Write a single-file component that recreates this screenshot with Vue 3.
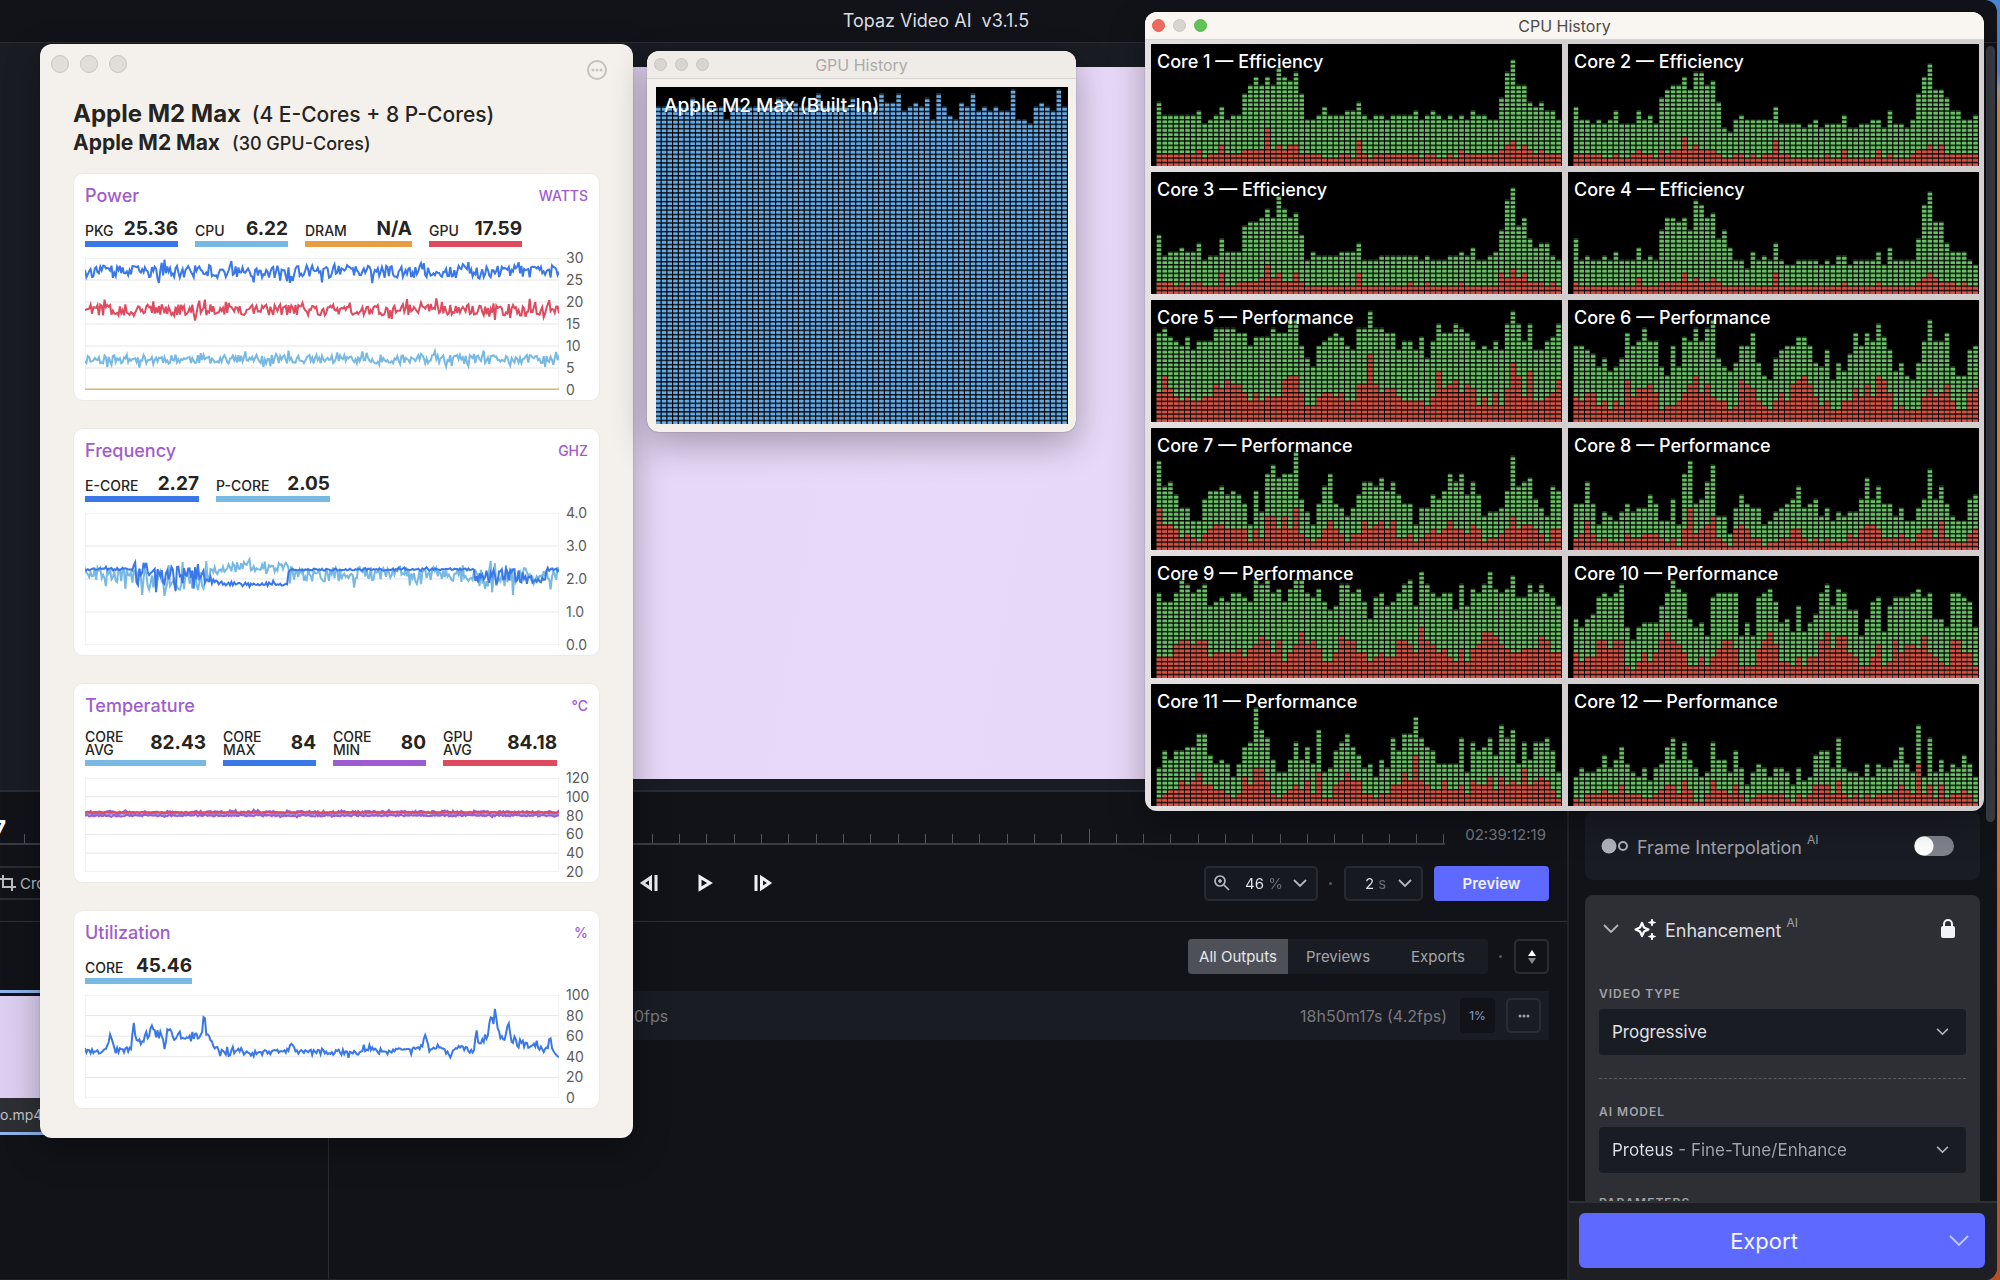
<script setup>
// Small deterministic generator so that every load draws the same traces.
function rng(seed) {
  let s = seed
  return () => {
    s = (s * 1664525 + 1013904223) % 4294967296
    return s / 4294967296
  }
}

function valueAt(keys, t) {
  for (let i = 1; i < keys.length; i++) {
    const [t1, v1, a1] = keys[i]
    const [t0, v0, a0] = keys[i - 1]
    if (t <= t1) {
      const k = (t - t0) / (t1 - t0 || 1)
      return [v0 + (v1 - v0) * k, a0 + (a1 - a0) * k]
    }
  }
  const last = keys[keys.length - 1]
  return [last[1], last[2]]
}

// keys: [time 0..1, value, noise amplitude]
function trace(keys, seed, min, max, height) {
  const rand = rng(seed)
  const n = 340
  const pts = []
  for (let i = 0; i <= n; i++) {
    const t = i / n
    const [v, a] = valueAt(keys, t)
    const spike = rand() > 0.85 ? 2 : 1
    const y = height * (1 - (v + (rand() - 0.5) * 2 * a * spike - min) / (max - min))
    pts.push(`${(t * 474).toFixed(1)},${y.toFixed(1)}`)
  }
  return pts.join(' ')
}

const flat = (v, a) => [[0, v, a], [1, v, a]]
const BLUE = '#3a78e8'
const SKY = '#77b9e2'
const RED = '#de4a5e'
const ORANGE = '#e99d42'
const PURPLE = '#9d5cd0'

const cards = [
  {
    title: 'Power', unit: 'WATTS', height: 132, min: 0, max: 30,
    ticks: ['30', '25', '20', '15', '10', '5', '0'],
    legend: [
      { label: 'PKG', value: '25.36', color: BLUE, size: 'w93' },
      { label: 'CPU', value: '6.22', color: SKY, size: 'w93' },
      { label: 'DRAM', value: 'N/A', color: ORANGE, size: 'w107' },
      { label: 'GPU', value: '17.59', color: RED, size: 'w93' },
    ],
    series: [
      { color: '#dcb36f', keys: flat(0.1, 0), seed: 1 },
      { color: SKY, keys: flat(7, 1), seed: 11 },
      { color: RED, keys: flat(18.2, 1.3), seed: 24 },
      { color: BLUE, keys: flat(26.9, 1.4), seed: 37 },
    ],
  },
  {
    title: 'Frequency', unit: 'GHZ', height: 132, min: 0, max: 4,
    ticks: ['4.0', '3.0', '2.0', '1.0', '0.0'],
    legend: [
      { label: 'E-CORE', value: '2.27', color: BLUE, size: 'w114' },
      { label: 'P-CORE', value: '2.05', color: SKY, size: 'w114' },
    ],
    series: [
      {
        color: SKY, seed: 52,
        keys: [[0, 2.15, .2], [.1, 2.1, .22], [.11, 2, .32], [.25, 2, .35], [.27, 2.25, .18], [.34, 2.4, .15],
          [.42, 2.35, .15], [.44, 2.15, .22], [.82, 2.15, .24], [.84, 2, .3], [.9, 1.9, .35], [.92, 2.15, .22], [1, 2.15, .28]],
      },
      {
        color: BLUE, seed: 64,
        keys: [[0, 2.3, .04], [.1, 2.3, .04], [.105, 2.08, .28], [.25, 2.15, .26], [.27, 1.92, .08], [.3, 1.85, .05],
          [.4, 1.85, .05], [.427, 1.83, .04], [.43, 2.28, .03], [.82, 2.3, .03], [.825, 2.1, .24], [.91, 2.1, .22],
          [.93, 2, .1], [.97, 1.95, .1], [.975, 2.3, .05], [1, 2.28, .05]],
      },
    ],
  },
  {
    title: 'Temperature', unit: '°C', height: 94, min: 20, max: 120, tall: true,
    ticks: ['120', '100', '80', '60', '40', '20'],
    legend: [
      { label: 'CORE AVG', value: '82.43', color: SKY, size: 'w121' },
      { label: 'CORE MAX', value: '84', color: BLUE, size: 'w93' },
      { label: 'CORE MIN', value: '80', color: PURPLE, size: 'w93' },
      { label: 'GPU AVG', value: '84.18', color: RED, size: 'w114' },
    ],
    series: [
      { color: '#8f8fe0', keys: flat(81.6, .8), seed: 71 },
      { color: PURPLE, keys: flat(83.8, 1.2), seed: 75 },
      { color: PURPLE, keys: flat(80, .9), seed: 79 },
      { color: RED, keys: flat(83.4, .2), seed: 83 },
    ],
  },
  {
    title: 'Utilization', unit: '%', height: 103, min: 0, max: 100,
    ticks: ['100', '80', '60', '40', '20', '0'],
    legend: [{ label: 'CORE', value: '45.46', color: SKY, size: 'w107' }],
    series: [
      {
        color: BLUE, seed: 95,
        keys: [[0, 47, 2], [.02, 44, 2], [.047, 47, 2], [.053, 63, 1], [.063, 46, 3], [.098, 47, 3], [.102, 74, 1],
          [.108, 54, 5], [.135, 63, 5], [.17, 59, 6], [.178, 70, 3], [.185, 60, 5], [.24, 59, 5], [.248, 64, 3],
          [.251, 87, 0], [.256, 62, 2], [.272, 52, 3], [.283, 44, 3], [.42, 44, 3], [.436, 52, 1], [.445, 45, 2],
          [.58, 44, 3], [.6, 50, 3], [.62, 45, 3], [.71, 47, 3], [.717, 62, 1], [.726, 47, 2], [.75, 50, 1],
          [.77, 43, 2], [.79, 50, 3], [.82, 44, 2], [.826, 66, 2], [.832, 50, 3], [.85, 63, 3], [.857, 84, 1],
          [.861, 68, 1], [.865, 88, 0], [.872, 60, 3], [.886, 57, 2], [.893, 74, 0], [.899, 58, 4], [.92, 52, 5],
          [.975, 46, 3], [.981, 62, 0], [.986, 46, 1], [1, 42, 3]],
      },
    ],
  },
]
cards.forEach((c) => c.series.forEach((s) => { s.points = trace(s.keys, s.seed, c.min, c.max, c.height) }))

// One base-36 digit per column: the number of lit cells (total, then system share).
const cores = [
  ['Efficiency', 'fccccccdabcebcchjljljnlkmhbbcecccddfcbccbccccdbcdcbcbcbdccbbgmpjjfefddb',
    '33333334233533344449454553333222332632333333332332232433333345645434333'],
  ['Efficiency', 'ebbababdaaadbcagijjlimmjkf98bcbbbbbeaaaa9ab9aaac99aabb9daa9bhloiigddbbc',
    '33333223223433243447454443223323233633222222322422222423222344545333333'],
  ['Efficiency', 'e9aabaac899daaaghhikinkije8a9999aaac8889999999898889' + '9a9b889afmpgidbcc98',
    '33323233222522333347453353222222222522222222322322222322222254645333232'],
  ['Efficiency', 'd898898a888b898fiihifmlijdfb886a898c87788887879978888a7b8888dlohhcaaa87',
    '32222222222422233335343343222222222522222222222322222322222234543332322'],
  ['Performance', 'lmkjikhjjjmmmmllikkkmllooifdijklkihmmqmmllhjjhkfjnllnmljhihjhnqnjnhhjkn',
    '7b8656556698a9975756666abb744677675599g97886555546c89a798464748eb6c5567a'.replace('75756666', '7575666')],
  ['Performance', 'iihgdfcdflijmjjdbidkjmjmofdceiilebafhiikkiedhaecgliljnkhcebaejojjldbbhi',
    '657745354a68897344579b7965534a985435759ab964533558696ba7343336867953378'],
  ['Performance', 'lfgdaa77ceefdedb6e9ikhiinc96bfiba8adggfhegdbb6aadceigidgd899aemfghca8fe',
    'a66534324566555525388585a4323575424475675733423454575546523345856654255'],
  ['Performance', 'bbgb69879b9aadb77c6ilbcgk884adbaa679abcfabc8a79899chcfbb8a77acjcfb877cd',
    '34742322243344432315a45683215653312233553232322243566533343245537322245'],
  ['Performance', 'kiiknmklmhijikkjinmnklilnnkjlighmmkliejkhikmnhpmkjkkgmhlkmplklojjmkmkjh',
    '555899899566667578a969468b897446a9966456559986c9867547478bba8766777a966'],
  ['Performance', 'ecefjkjkmc9cdddhknlkecdajkkkkadajklidebhbdfkmhlkggaeijbhjjjkljkeeckkjic',
    '6455997993246469b98633535799733379b844353559b7aa6533583496887a654399663'],
  ['Performance', '9dbddeehhcaba7aefnigb88bfbeai89dfhec9a7b9gdhhlgedaaaag8fdegcjgiafbffgd8',
    '234465685544323759963234546382256866332335586c6544644536557475659567642'],
  ['Performance', '79889c9bea87969aegbfb978fbb8d958a979985967cdd9g9887a7a99bea8j7g8b8a9ca7',
    '213334335333223455364113644353123333321323555363232323334543a3525233431'],
].map(([kind, total, system], i) => ({
  label: `Core ${i + 1} — ${kind}`,
  user: columns(total, 0, 288, 86),
  system: columns(system, 0, 288, 86),
}))

function columns(digits, base, width, height) {
  const left = width - digits.length * 4
  return [...digits].map((d, i) => {
    const h = (base + parseInt(d, 36)) * 3
    return `M${left + i * 4} ${height - h}h3.2v${h}h-3.2z`
  }).join('')
}

const gpu = columns(
  '444444644444144444444665544474444464344755734546174215473434338110454384', 70, 288, 236)

const ticks = Array.from({ length: 53 }, (_, i) => i)
</script>

<template>
  <div class="desktop">
    <div class="app">
      <header class="titlebar"><h1>Topaz Video AI&nbsp; v3.1.5</h1></header>

      <div class="body">
        <main class="main">
          <section class="viewer"><div class="frame"></div></section>

          <section class="timeline">
            <div class="ruler-row">
              <div class="ruler">
                <span class="now">7</span>
                <i v-for="t in ticks" :key="t" class="tick" :class="{ major: t === 39 }"></i>
              </div>
              <span class="length">02:39:12:19</span>
            </div>
            <div class="controls">
              <button class="crop" type="button">
                <svg width="16" height="16" viewBox="0 0 16 16" fill="none" stroke="currentColor" stroke-width="2"><path d="M3 0v12h13M0 4h12v12" /></svg>
                Crop
              </button>
              <div class="transport">
                <button type="button" aria-label="Previous frame">
                  <svg width="20" height="20" viewBox="0 0 20 20" fill="none" stroke="currentColor" stroke-width="3"><path d="M11.500 4.500v11L3.500 10z" /><path d="M17 2v16" /></svg>
                </button>
                <button type="button" aria-label="Play">
                  <svg width="20" height="20" viewBox="0 0 20 20" fill="none" stroke="currentColor" stroke-width="3"><path d="M4 4v12l10-6z" /></svg>
                </button>
                <button type="button" aria-label="Next frame">
                  <svg width="20" height="20" viewBox="0 0 20 20" fill="none" stroke="currentColor" stroke-width="3"><path d="M8.500 4.500v11l8-5.500z" /><path d="M3 2v16" /></svg>
                </button>
              </div>
              <div class="right">
                <div class="pick zoom">
                  <svg class="lens" width="16" height="16" viewBox="0 0 16 16" fill="none" stroke="currentColor" stroke-width="1.700"><circle cx="6" cy="6" r="5" /><path d="M10 10l5 5M6 4v4M4 6h4" /></svg>
                  <select aria-label="Zoom"><option>46 %</option></select>
                  <svg class="chev" width="14" height="9" viewBox="0 0 14 9"><path d="M1 1l6 6 6-6" /></svg>
                </div>
                <span class="dot"></span>
                <div class="pick secs">
                  <select aria-label="Preview length"><option>2 s</option></select>
                  <svg class="chev" width="14" height="9" viewBox="0 0 14 9"><path d="M1 1l6 6 6-6" /></svg>
                </div>
                <button class="preview" type="button">Preview</button>
              </div>
            </div>
          </section>

          <section class="lower">
            <aside class="files">
              <div class="thumb">
                <div class="still"></div>
                <div class="name">o.mp4</div>
              </div>
            </aside>
            <div class="outputs">
              <div class="outputs-head">
                <div class="tabs">
                  <button type="button" class="on">All Outputs</button>
                  <button type="button">Previews</button>
                  <button type="button">Exports</button>
                </div>
                <span class="dot"></span>
                <button class="square" type="button" aria-label="Sort">
                  <svg width="10" height="16" viewBox="0 0 10 16"><path d="M5 1l4 6H1z" fill="#fff" /><path d="M5 15l4-6H1z" fill="#85878d" /></svg>
                </button>
              </div>
              <div class="job">
                <span class="job-name">0fps</span>
                <span class="eta">18h50m17s (4.2fps)</span>
                <span class="badge">1%</span>
                <button class="square" type="button" aria-label="More">
                  <svg width="12" height="4" viewBox="0 0 12 4" fill="#a0a2a8"><circle cx="2" cy="2" r="1.500" /><circle cx="6" cy="2" r="1.500" /><circle cx="10" cy="2" r="1.500" /></svg>
                </button>
              </div>
            </div>
          </section>
        </main>

        <aside class="sidebar">
          <div class="panels">
            <div class="panel interp">
              <svg width="28" height="18" viewBox="0 0 28 18"><circle cx="8" cy="9" r="7.500" fill="#b0b2ba" /><circle cx="22" cy="9" r="4" fill="none" stroke="#b0b2ba" stroke-width="2" /></svg>
              <label for="interp">Frame Interpolation <sup>AI</sup></label>
              <input id="interp" type="checkbox" role="switch" />
            </div>
            <div class="panel enhance">
              <div class="enhance-head">
                <svg class="chev" width="16" height="10" viewBox="0 0 16 10"><path d="M1 1l7 7 7-7" /></svg>
                <svg class="spark" width="24" height="24" viewBox="0 0 24 24">
                  <path d="M9 6l2 4.500 4.500 2-4.500 2-2 4.500-2-4.500-4.500-2 4.500-2z" fill="none" stroke="#fff" stroke-width="2.200" stroke-linejoin="round" />
                  <path d="M19 2l.8 2.700 2.700.8-2.700.8-.8 2.700-.8-2.700-2.700-.8 2.700-.8zM19 16l.8 2.700 2.700.8-2.700.8-.8 2.700-.8-2.700-2.700-.8 2.700-.8z" fill="#fff" stroke="#fff" />
                </svg>
                <h2>Enhancement <sup>AI</sup></h2>
                <svg class="lock" width="16" height="20" viewBox="0 0 16 20"><path d="M4 8V5a4 4 0 0 1 8 0v3" fill="none" stroke="#f2f3f8" stroke-width="2" /><rect x="1" y="7" width="14" height="12" rx="2" fill="#f2f3f8" /></svg>
              </div>
              <label class="cap first" for="vtype">VIDEO TYPE</label>
              <div class="drop">
                <select id="vtype"><option>Progressive</option></select>
                <svg class="chev" width="13" height="8" viewBox="0 0 14 9"><path d="M1 1l6 6 6-6" /></svg>
              </div>
              <hr />
              <label class="cap" for="model">AI MODEL</label>
              <div class="drop">
                <select id="model" class="two"><option>Proteus - Fine-Tune/Enhance</option></select>
                <svg class="chev" width="13" height="8" viewBox="0 0 14 9"><path d="M1 1l6 6 6-6" /></svg>
              </div>
              <div class="cap params">PARAMETERS</div>
            </div>
          </div>
          <footer class="foot">
            <button class="export" type="button">
              <span>Export</span>
              <svg class="chev" width="20" height="12" viewBox="0 0 20 12"><path d="M1 1l9 9 9-9" /></svg>
            </button>
          </footer>
          <div class="scroll"></div>
        </aside>
      </div>
    </div>

    <!-- Power monitor -->
    <section class="window monitor">
      <div class="monitor-bar">
        <div class="lights big"><i></i><i></i><i></i></div>
        <button type="button" class="more" aria-label="Options">
          <svg width="22" height="22" viewBox="0 0 22 22"><circle cx="11" cy="11" r="9" fill="none" stroke="#c5c2be" stroke-width="2" /><g fill="#c5c2be"><circle cx="7" cy="11" r="1.500" /><circle cx="11" cy="11" r="1.500" /><circle cx="15" cy="11" r="1.500" /></g></svg>
        </button>
      </div>
      <h2 class="chip">Apple M2 Max <span>(4 E-Cores + 8 P-Cores)</span></h2>
      <h3 class="chip small">Apple M2 Max <span>(30 GPU-Cores)</span></h3>
      <div class="cards">
        <article v-for="c in cards" :key="c.title" class="card">
          <div class="card-head"><h4>{{ c.title }}</h4><span>{{ c.unit }}</span></div>
          <ul class="legend" :class="{ tall: c.tall }">
            <li v-for="l in c.legend" :key="l.label" :class="l.size" :style="{ borderColor: l.color }">
              <span>{{ l.label }}</span><b>{{ l.value }}</b>
            </li>
          </ul>
          <div class="plot">
            <svg width="474" :height="c.height" :viewBox="`0 0 474 ${c.height}`">
              <rect x="0" y="0" width="474" :height="c.height" fill="none" stroke="#e6e6e8" />
              <path v-for="n in c.ticks.length - 2" :key="n" :d="`M0 ${(n * c.height) / (c.ticks.length - 1)}h474`" stroke="#e6e6e8" />
              <polyline v-for="s in c.series" :key="s.seed" :points="s.points" fill="none" :stroke="s.color" stroke-width="2" />
            </svg>
            <ol class="axis"><li v-for="t in c.ticks" :key="t">{{ t }}</li></ol>
          </div>
        </article>
      </div>
    </section>

    <!-- GPU history -->
    <section class="window gpu">
      <div class="bar"><div class="lights"><i></i><i></i><i></i></div><h2>GPU History</h2></div>
      <div class="graph">
        <svg viewBox="0 0 288 236" preserveAspectRatio="xMaxYMax slice">
          <defs>
            <pattern id="rows" width="8" height="3" patternUnits="userSpaceOnUse" y="2"><path d="M0 .500h8" stroke="#000" stroke-opacity=".9" /></pattern>
          </defs>
          <path :d="gpu" fill="#66abe6" />
          <rect width="288" height="236" fill="url(#rows)" />
        </svg>
        <span>Apple M2 Max (Built-In)</span>
      </div>
    </section>

    <!-- CPU history -->
    <section class="window cpu">
      <div class="bar"><div class="lights active"><i></i><i></i><i></i></div><h2>CPU History</h2></div>
      <div class="cores">
        <div v-for="c in cores" :key="c.label" class="graph">
          <svg viewBox="0 0 288 86" preserveAspectRatio="xMaxYMax slice">
            <path :d="c.user" fill="#69be66" />
            <path :d="c.system" fill="#dc4d44" />
            <rect width="288" height="86" fill="url(#rows)" />
          </svg>
          <span>{{ c.label }}</span>
        </div>
      </div>
    </section>
  </div>
</template>

<style>
body { margin: 0; background: #111318; }
</style>

<style scoped>
* { box-sizing: border-box; }
h1, h2, h3, h4, ul, ol { margin: 0; padding: 0; font-weight: 400; list-style: none; }
button, select, input { font: inherit; color: inherit; margin: 0; }
button { border: 0; padding: 0; background: none; }
svg { display: block; flex: none; }

.desktop {
  position: relative;
  min-height: 100vh;
  display: flex;
  padding-right: 3px;
  overflow: hidden;
  font-family: Inter, "Liberation Sans", sans-serif;
  color: #dcdde1;
  background: linear-gradient(#4b86d4 0 70px, #a99a8c 90px, #cf8b45 110px, #d8873c 600px, #c9652f 900px, #b4502a);
}
.app {
  flex: 1;
  min-width: 0;
  display: flex;
  flex-direction: column;
  background: #111318;
  border-radius: 0 12px 12px 0;
  overflow: hidden;
}
.titlebar { border-bottom: 1px solid #2c2e33; height: 43px; display: grid; place-items: center; }
.titlebar h1 { font-size: 18px; line-height: 42px; margin: 0 0 2px -125px; }
.body { flex: 1; display: flex; min-height: 0; }
.main { flex: 1; min-width: 0; display: flex; flex-direction: column; }

.viewer { flex: 1; background: #1a1c24; padding: 24px 0 11px; display: flex; justify-content: center; }
.frame { width: 81%; background: linear-gradient(100deg, #e4d5f5, #e8d9f8 60%, #e6d7f7); }

.timeline { border-top: 2px solid #2a2c31; border-bottom: 1px solid #2e3035; }
.ruler-row { display: flex; height: 53px; padding-right: 21px; }
.ruler {
  position: relative;
  flex: 1;
  display: flex;
  align-items: flex-end;
  justify-content: space-between;
  padding-left: 24px;
  border-bottom: 2px solid #3b3d42;
}
.now { position: absolute; left: -7px; top: 23px; font-size: 22px; line-height: 26px; font-weight: 800; color: #fff; }
.tick { width: 1px; height: 9px; background: #55575d; }
.tick.major { height: 14px; }
.length { font-size: 15px; line-height: 20px; color: #777980; margin: 33px 0 0 20px; }
.controls { height: 76px; display: flex; align-items: center; justify-content: space-between; padding-right: 18px; }
.crop {
  width: 100px;
  height: 34px;
  display: flex;
  align-items: center;
  gap: 4px;
  font-size: 15px;
  color: #b9bbc1;
  border: solid #2a2c31;
  border-width: 2px 0;
}
.transport { flex: 1; display: flex; gap: 37px; color: #f0f1f5; padding-left: 539px; }
.right { display: flex; align-items: center; }
.pick {
  height: 35px;
  display: flex;
  align-items: center;
  border: 2px solid #282a31;
  border-radius: 5px;
  background: #171920;
  color: #b9bbc1;
  padding-right: 9px;
}
.pick select, .drop select { appearance: none; border: 0; padding: 0; flex: 1; min-width: 0; outline: 0; }
.pick select {
  font-size: 15px;
  color: transparent;
  background: linear-gradient(90deg, #e6e7ea 20px, #6d6f76 20px);
  background-clip: text;
}
.pick.zoom { width: 114px; padding-left: 8px; }
.pick.zoom select { margin-left: 15px; }
.pick.secs { width: 79px; padding-left: 19px; }
.pick.secs select { background: linear-gradient(90deg, #e6e7ea 11px, #6d6f76 11px); background-clip: text; }
.chev { fill: none; stroke: #b4b6bc; stroke-width: 1.8; }
.dot { width: 3px; height: 3px; border-radius: 2px; background: #55575d; margin: 0 12px 0 11px; }
.preview {
  width: 115px;
  height: 35px;
  margin-left: 11px;
  border-radius: 4px;
  background: #5e6aff;
  color: #f0f1ff;
  font-size: 15px;
  font-weight: 600;
}

.lower { height: 358px; display: flex; border-bottom: 1px solid #202228; }
.files { width: 329px; border-right: 1px solid #2a2c31; padding-top: 68px; }
.thumb { width: 300px; border: solid #8fb4ea; border-width: 3px 0; }
.still { height: 105px; border-top: 3px solid #111318; background: linear-gradient(100deg, #dccff2, #e6d6f4); }
.name { background: #2e2f34; font-size: 14px; line-height: 34px; color: #c4c6cb; }
.outputs { flex: 1; padding: 17px 18px 0; }
.outputs-head { display: flex; align-items: center; justify-content: flex-end; }
.tabs { display: flex; background: #1a1c23; border-radius: 4px; overflow: hidden; font-size: 15px; color: #a3a5ab; }
.tabs button { width: 100px; height: 35px; }
.tabs .on { background: #4d5057; color: #e6e7ea; }
.square {
  width: 35px;
  height: 35px;
  display: grid;
  place-items: center;
  border: 2px solid #2a2c33;
  border-radius: 5px;
}
.job {
  height: 49px;
  margin-top: 17px;
  padding: 0 8px 0 287px;
  display: flex;
  align-items: center;
  background: #1a1c24;
  color: #777980;
  font-size: 16px;
}
.job-name { flex: 1; }
.badge { width: 35px; height: 35px; margin: 0 11px 0 13px; border-radius: 4px; background: #111318; color: #86a0d8; font-size: 12px; line-height: 35px; text-align: center; }

.sidebar { position: relative; width: 430px; flex: none; display: flex; flex-direction: column; border-left: 2px solid #22242a; }
.panels { flex: 1; min-height: 0; padding: 0 17px 0 16px; display: flex; flex-direction: column; justify-content: flex-end; gap: 15px; overflow: hidden; }
.panel { border-radius: 8px; }
.interp { height: 68px; display: flex; align-items: center; gap: 8px; padding: 0 26px 0 16px; background: #1a1c24; color: #a0a2a9; font-size: 18px; }
.interp label { flex: 1; }
sup { font-size: 12px; line-height: 12px; color: #a0a2a9; vertical-align: 10px; }
.interp input { appearance: none; width: 40px; height: 20px; border-radius: 10px; background: radial-gradient(circle at 10px 10px, #fff 9px, #7f828c 10px); }
.enhance { height: 306px; padding: 0 14px; background: #2e2f34; border-radius: 8px 8px 0 0; overflow: hidden; }
.enhance-head { height: 68px; display: flex; align-items: center; padding: 0 10px 0 4px; }
.enhance-head h2 { flex: 1; font-size: 18px; margin-left: 8px; }
.spark { margin-left: 14px; }
.cap { display: block; margin: 25px 0 7px; font-size: 12px; line-height: 16px; font-weight: 600; letter-spacing: 1px; color: #a0a2a9; }
.cap.first { margin-top: 23px; }
.cap.params { margin: 22px 0 0; }
.drop { height: 46px; display: flex; align-items: center; background: #1a1c23; border-radius: 4px; padding: 0 17px 0 13px; }
.drop select { font-size: 17px; color: #e0e1e5; background: none; }
.drop .two { color: transparent; background: linear-gradient(90deg, #e0e1e5 66px, #a3a5ab 66px); background-clip: text; }
hr { margin: 23px 0 0; border: 0; border-top: 1px dashed #5a5c62; }
.foot { height: 79px; border-top: 2px solid #2e3036; background: #1d1f25; padding: 10px 12px 10px 10px; }
.export { width: 100%; height: 55px; display: flex; align-items: center; padding-right: 16px; border-radius: 6px; background: #5e6aff; color: #f4f5ff; font-size: 22px; }
.export span { flex: 1; }
.export .chev { stroke: #c4c8ff; }
.scroll { position: absolute; right: 2px; top: 3px; width: 9px; height: 776px; border-radius: 5px; background: #3b3d45; }

.window { position: absolute; background: #f4f1ec; border-radius: 12px; box-shadow: 0 12px 36px rgba(0, 0, 0, .3), 0 0 1px rgba(0, 0, 0, .6); color: #262422; }
.lights { display: flex; gap: 8px; }
.lights i { width: 13px; height: 13px; border-radius: 50%; background: #d8d5d1; border: 1px solid #c8c5c1; }
.lights.big { gap: 11px; }
.lights.big i { width: 18px; height: 18px; background: #e1deda; }
.lights.active i:first-child { background: #ee6a5e; border-color: #e2604f; }
.lights.active i:last-child { background: #5fc454; border-color: #56b84b; }
.bar { position: relative; height: 28px; display: grid; place-items: center; border-bottom: 1px solid #d9d6d2; color: #acaaa7; border-radius: 12px 12px 0 0; background: #efece7; }
.bar .lights { position: absolute; left: 7px; top: 7px; }
.bar h2 { font-size: 16px; line-height: 24px; }

.monitor { left: 40px; top: 44px; width: 593px; padding: 0 33px 29px; }
.monitor-bar { height: 52px; margin: 0 -8px 0 -22px; display: flex; justify-content: space-between; padding-top: 11px; }
.more { height: 30px; }
.chip { font-size: 24px; line-height: 28px; font-weight: 700; margin-top: -10px; padding-top: 14px; }
.chip span { font-size: 21px; font-weight: 500; margin-left: 5px; }
.chip.small { font-size: 21px; margin: 0; padding: 0; }
.chip.small span { font-size: 18px; margin-left: 7px; }
.cards { display: flex; flex-direction: column; gap: 27px; margin-top: 15px; }
.card { background: #fff; border: 1px solid #eceae6; border-radius: 10px; padding: 11px 11px 10px; }
.card-head { display: flex; justify-content: space-between; color: #a05ccf; font-weight: 500; font-size: 14px; line-height: 22px; }
.card-head h4 { font-size: 18px; font-weight: 500; }
.legend { display: flex; gap: 17px; height: 40px; margin-bottom: 11px; }
.legend li { display: flex; justify-content: space-between; align-items: flex-end; border-bottom: 6px solid; font-size: 14px; line-height: 20px; font-weight: 500; }
.legend b { font-size: 19px; line-height: 24px; }
.legend.tall { height: 49px; margin-bottom: 12px; }
.legend.tall li { align-items: center; line-height: 13px; padding: 8px 0 0; }
.legend.tall li span { width: 46px; }
.w93 { width: 93px; }
.w107 { width: 107px; }
.w114 { width: 114px; }
.w121 { width: 121px; }
.plot { display: flex; gap: 7px; }
.axis { margin: -8px 0; display: flex; flex-direction: column; justify-content: space-between; font-size: 14px; line-height: 16px; color: #5c5a58; }

.graph { position: relative; background: #000; overflow: hidden; color: #fff; font-weight: 500; }
.graph svg { width: 100%; height: 100%; }
.graph span { position: absolute; font-size: 18px; line-height: 22px; white-space: nowrap; }
.gpu { left: 647px; top: 51px; width: 429px; padding-bottom: 8px; }
.gpu .graph { margin: 8px 8px 0 9px; height: 337px; }
.gpu .graph span { left: 8px; top: 8px; font-size: 19px; }
.cpu { right: 16px; top: 12px; width: 839px; background: linear-gradient(90deg, #e4dfe0, #d3cfd0 50%); }
.cpu .bar { background: #f9f5f0; color: #4f4c49; }
.cores { display: grid; grid-template-columns: 1fr 1fr; gap: 6px; padding: 4px 5px 5px 6px; }
.cores .graph { height: 122px; }
.cores .graph span { left: 6px; top: 7px; }
</style>
